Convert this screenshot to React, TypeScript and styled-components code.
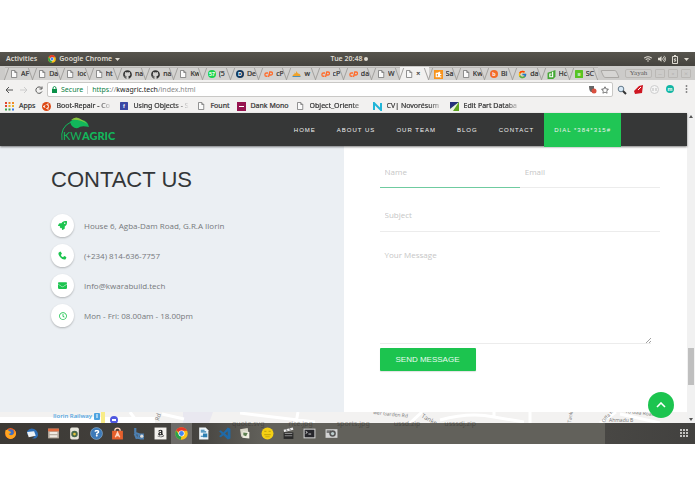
import React from 'react';
import styled, { createGlobalStyle, css } from 'styled-components';
import { FaRocket, FaEnvelope, FaRegClock, FaGithub, FaAmazon, FaWifi, FaVolumeUp, FaQuestion, FaRegStar } from 'react-icons/fa';
import { FcGoogle } from 'react-icons/fc';

const Global = createGlobalStyle`
  * { box-sizing: border-box; }
  body { margin: 0; background: #fff; font-family: "Open Sans", "Noto Sans", sans-serif; }
  button, input, textarea { font: inherit; }
`;

const Desktop = styled.div`
  display: flex;
  flex-direction: column;
  padding: 52px 0;
  overflow: hidden;
`;

/* ---------- system bar ---------- */
const SystemBar = styled.header`
  display: grid;
  grid-template-columns: 1fr auto 1fr;
  align-items: center;
  height: 14px;
  padding: 0 6px;
  background: linear-gradient(#57554e, #45433e);
  color: #dfdbd2;
  font: 600 7px/14px "Noto Sans", sans-serif;
`;
const BarGroup = styled.div<{ $end?: boolean }>`
  display: flex;
  align-items: center;
  gap: ${p => (p.$end ? 6 : 3)}px;
  justify-content: ${p => (p.$end ? 'flex-end' : 'flex-start')};
`;
const Activities = styled.span`
  margin-right: 8px;
`;
const Clock = styled.time`
  display: flex;
  align-items: center;
  gap: 2px;
  padding-left: 4px;
`;
const Dot = styled.span`
  width: 4px;
  height: 4px;
  border-radius: 50%;
  background: #dfdbd2;
`;

/* ---------- tabs ---------- */
const TabStrip = styled.div`
  display: flex;
  align-items: flex-end;
  height: 14px;
  padding-left: 5px;
  background: #cccbc9;
`;
const Tabs = styled.div`
  flex: 1;
  display: grid;
  grid-template-columns: repeat(21, minmax(0, 1fr));
`;
const Tab = styled.button<{ $active?: boolean }>`
  position: relative;
  display: flex;
  align-items: center;
  gap: 3px;
  height: 13px;
  padding: 0 0 0 5px;
  border: 0;
  border-top: 1px solid ${p => (p.$active ? '#f2f1f0' : '#b9b7b4')};
  background: ${p => (p.$active ? '#f2f1f0' : '#d3d2d0')};
  color: #333;
  font: 7px/12px "Noto Sans", sans-serif;
  &::before, &::after {
    content: "";
    position: absolute;
    top: 0;
    width: 1px;
    height: 12px;
    background: #a3a19e;
  }
  &::before { left: 1px; transform: skewX(-20deg); }
  &::after { right: 2px; transform: skewX(20deg); }
`;
const TabText = styled.span`
  width: 9px;
  overflow: hidden;
  white-space: nowrap;
  text-align: left;
  -webkit-text-stroke: 0.2px #333;
`;
const WindowTools = styled.div`
  flex: 0 0 97px;
  display: flex;
  align-items: center;
  justify-content: flex-end;
  gap: 3px;
  height: 13px;
  padding-right: 4px;
  color: #5d5c5a;
  font: 7px/10px "Liberation Serif", serif;
`;
const NewTab = styled.button`
  width: 16px;
  height: 8px;
  margin-right: auto;
  margin-left: 4px;
  padding: 0;
  border: 1px solid #aaa8a5;
  border-radius: 2px;
  background: #d6d5d3;
  transform: skewX(25deg);
`;
const Profile = styled.button`
  width: 27px;
  height: 9px;
  padding: 0;
  border: 1px solid #bab8b5;
  border-radius: 2px;
  background: #cfcecc;
  color: inherit;
  line-height: 7px;
`;
const WindowButton = styled.button`
  width: 10px;
  height: 9px;
  padding: 0;
  border: 1px solid #bab8b5;
  border-radius: 1px;
  background: transparent;
  color: #aaa8a5;
  line-height: 6px;
`;

/* ---------- toolbar ---------- */
const Toolbar = styled.div`
  display: flex;
  align-items: center;
  height: 19px;
  padding: 0 3px 0 3px;
  gap: 3px;
  background: #f2f1f0;
`;
const IconButton = styled.button`
  display: flex;
  padding: 0;
  border: 0;
  background: none;
  width: 12px;
  justify-content: center;
  color: #555;
`;
const Address = styled.label`
  flex: 1;
  display: flex;
  align-items: center;
  gap: 4px;
  height: 15px;
  margin: 0 0 0 -1px;
  padding: 0 3px 0 4px;
  border: 1px solid #c9c8c6;
  border-radius: 2px;
  background: #fff;
  color: #0b8043;
  font: 7px/13px "Noto Sans", sans-serif;
`;
const Secure = styled.span`
  padding-right: 4px;
  border-right: 1px solid #d6d6d6;
  line-height: 8px;
`;
const Url = styled.a`
  flex: 1;
  color: #888;
  text-decoration: none;
`;
const Scheme = styled.span`color: #0b8043;`;
const Host = styled.span`color: #222;`;
const Extensions = styled.div`
  display: flex;
  gap: 4px;
`;

/* ---------- bookmarks ---------- */
const Bookmarks = styled.nav`
  display: flex;
  align-items: center;
  gap: 7px;
  height: 14px;
  padding: 0 5px;
  background: #f2f1f0;
`;
const Bookmark = styled.a`
  display: flex;
  align-items: center;
  gap: 5px;
  color: #333;
  text-decoration: none;
  font: 7px/14px "Noto Sans", sans-serif;
  -webkit-text-stroke: 0.2px #333;
`;
const BookmarkIcon = styled.span`
  display: flex;
  justify-content: center;
  width: 9px;
`;
const BookmarkText = styled.span<{ $fade?: boolean }>`
  white-space: nowrap;
  ${p => p.$fade && css`
    width: 56px;
    mask-image: linear-gradient(90deg, #000 75%, transparent);
  `}
`;

/* ---------- page ---------- */
const Viewport = styled.div`
  position: relative;
  display: flex;
`;
const Page = styled.div`
  flex: 1;
  min-width: 0;
`;
const SiteNav = styled.nav`
  display: flex;
  align-items: center;
  justify-content: flex-end;
  height: 33px;
  padding: 0 66px 0 61px;
  background: #363737;
  box-shadow: 0 1px 2px rgba(0, 0, 0, 0.5);
  position: relative;
`;
const Brand = styled.a`
  display: flex;
  margin-right: auto;
`;
const NavLink = styled.a<{ $cta?: boolean }>`
  color: #f1f1f1;
  font: 6px/34px "Liberation Sans", sans-serif;
  letter-spacing: 1px;
  text-decoration: none;
  white-space: nowrap;
  padding: 0 10px 0 11px;
  ${p => p.$cta && css`
    align-self: flex-start;
    background: #20c655;
    padding: 0 10px;
  `}
`;
const Contact = styled.main`
  display: grid;
  grid-template-columns: 1fr 1fr;
`;
const Info = styled.section`
  padding: 18px 20px 0 51px;
  background: #ebeff3;
`;
const Title = styled.h1`
  margin: 0 0 18px;
  color: #333638;
  font: 400 22px/32px "Liberation Sans", sans-serif;
`;
const InfoList = styled.ul`
  display: flex;
  flex-direction: column;
  gap: 7px;
  margin: 0;
  padding: 0;
  list-style: none;
`;
const InfoItem = styled.li`
  display: flex;
  align-items: center;
  gap: 10px;
  color: #75787b;
  font-size: 8px;
  line-height: 12px;
`;
const Badge = styled.span`
  display: flex;
  align-items: center;
  justify-content: center;
  width: 23px;
  height: 23px;
  border-radius: 50%;
  background: #fff;
  box-shadow: 0 1px 2px rgba(0, 0, 0, 0.25);
  color: #1cc44f;
`;
const Form = styled.form`
  display: grid;
  grid-template-columns: 1fr 1fr;
  align-content: start;
  padding: 9px 27px 41px 36px;
  background: #fff;
`;
const fieldStyle = css`
  display: block;
  width: 100%;
  margin: 0;
  border: 0;
  border-bottom: 1px solid #ececec;
  border-radius: 0;
  background: transparent;
  color: #555;
  font-size: 8px;
  outline: 0;
  &::placeholder { color: #c6c6c6; opacity: 1; }
`;
const Field = styled.label<{ $wide?: boolean }>`
  ${p => p.$wide && css`grid-column: 1 / -1;`}
`;
const Input = styled.input<{ $focus?: boolean; $tall?: boolean }>`
  ${fieldStyle}
  height: ${p => (p.$tall ? 44 : 33)}px;
  padding: ${p => (p.$tall ? 10 : 0)}px 5px 0;
  ${p => p.$focus && css`border-bottom-color: #6fcba0;`}
`;
const Message = styled.textarea`
  ${fieldStyle}
  width: calc(100% - 9px);
  height: 112px;
  padding: 18px 5px 0;
  line-height: 10px;
  resize: none;
`;
const MessageBox = styled.div`
  position: relative;
`;
const Grip = styled.svg`
  position: absolute;
  right: 9px;
  bottom: 1px;
`;
const Send = styled.button`
  justify-self: start;
  height: 23px;
  margin-top: 4px;
  padding: 0 16px;
  border: 0;
  border-radius: 1px;
  background: #1cc44f;
  color: #e9fbef;
  font: 8px/22px "Liberation Sans", sans-serif;
  box-shadow: 0 1px 1px rgba(0, 0, 0, 0.12);
`;
const MapArea = styled.svg`
  display: block;
  width: 100%;
  height: 11px;
  background: #f3f2f1;
`;
const ToTop = styled.button`
  position: absolute;
  right: 21px;
  bottom: 5px;
  display: flex;
  align-items: center;
  justify-content: center;
  width: 26px;
  height: 26px;
  padding: 0;
  border: 0;
  border-radius: 50%;
  background: #1cc44f;
`;
const ScrollTrack = styled.div`
  display: flex;
  flex-direction: column;
  align-items: center;
  width: 8px;
  padding: 2px 0;
  background: #f1f1f1;
`;
const ScrollThumb = styled.div`
  width: 6px;
  height: 37px;
  background: #bfbfbf;
`;
const Space = styled.div<{ $grow: number }>`
  flex: ${p => p.$grow};
`;

/* ---------- dock ---------- */
const Dock = styled.footer`
  position: relative;
  display: flex;
  align-items: center;
  height: 21px;
  background: linear-gradient(90deg, #3c3935 0, #45433f 28%, #62615b 38%, #62615b 87%, #484744 87%, #42413f 100%);
`;
const Launchers = styled.div`
  display: grid;
  grid-template-columns: repeat(16, 1fr);
  flex: 0 0 342px;
`;
const Launcher = styled.button<{ $active?: boolean }>`
  position: relative;
  display: flex;
  align-items: center;
  justify-content: center;
  height: 21px;
  padding: 0;
  border: 0;
  background: ${p => (p.$active ? '#6d6b68' : 'transparent')};
`;
const AppsGrid = styled.button`
  display: flex;
  margin-left: auto;
  padding: 0 6px;
  border: 0;
  background: none;
`;
const Ghosts = styled.div`
  position: absolute;
  left: 232px;
  top: -3px;
  display: flex;
  gap: 24px;
  color: rgba(35, 34, 32, 0.4);
  font: 7px/8px "Noto Sans", sans-serif;
`;

/* ---------- icons ---------- */
const Chrome = ({ size = 9 }: { size?: number }) => (
  <svg width={size} height={size} viewBox="0 0 24 24">
    <circle cx="12" cy="12" r="11.5" fill="#fbc116" />
    <path d="M12 12 L2 6.3 A11.5 11.5 0 0 1 22.5 7 H12Z" fill="#e5392c" />
    <path d="M2 6.3 L8 15 L12 17 L10.5 23.4 A11.5 11.5 0 0 1 2 6.3Z" fill="#2aa24c" />
    <circle cx="12" cy="12" r="5.6" fill="#fff" />
    <circle cx="12" cy="12" r="4.4" fill="#4286f5" />
  </svg>
);
const Doc = () => (
  <svg width="8" height="8" viewBox="0 0 16 16" fill="#fafafa" stroke="#707070" strokeWidth="1.5">
    <path d="M3 1h6.500l4 4v10H3Z M9.500 1v4h4" />
  </svg>
);
const Mark = ({ bg, text, round, fg = '#fff' }: { bg: string; text?: string; round?: boolean; fg?: string }) => (
  <svg width="8" height="8" viewBox="0 0 16 16">
    <rect width="16" height="16" rx={round ? 8 : 1} fill={bg} />
    <text x="8" y="12" fontSize="11" fontWeight="700" textAnchor="middle" fill={fg} fontFamily="Liberation Sans">{text}</text>
  </svg>
);
const CPanel = () => (
  <svg width="9" height="8" viewBox="0 0 18 16" fill="none" stroke="#ff6c2c" strokeWidth="2.600">
    <path d="M8 6H5a3 3 0 0 0 0 6.500h2M9 14l2.500-10h2.500a3 3 0 0 1 0 6h-3" />
  </svg>
);
const Cloud = () => (
  <svg width="9" height="8" viewBox="0 0 18 16"><path d="M1 12q0-3 4-4V5l3 2V2l4 5q5 0 5 5Z" fill="#f0a32b" /><path d="M1 12h16v2H1Z" fill="#4f90b8" /></svg>
);
const Android = () => (
  <svg width="9" height="9" viewBox="0 0 16 16"><rect width="16" height="16" fill="#f7941d" /><path d="M7 6H4v6h4V4m0 4h5M10 3v8q0 2 3 1" fill="none" stroke="#fff" strokeWidth="2" /></svg>
);
const Leafy = () => (
  <svg width="9" height="9" viewBox="0 0 16 16"><path d="M1 5l8-3 6-2v12l-4 4H1Z" fill="#45a735" /><path d="M8 7H5v5h5V3" fill="none" stroke="#fff" strokeWidth="2" /></svg>
);

const tabs: [React.ReactNode, string][] = [
  [<Doc />, 'AF'], [<Doc />, 'Da'], [<Doc />, 'loc'], [<Doc />, 'ht'], [<FaGithub size={9} />, 'na'], [<FaGithub size={9} />, 'na'],
  [<Doc />, 'Kw'], [<Mark bg="#19d34b" text="57" round />, '(5'], [<Mark bg="#12395f" text="D" round />, 'De'], [<CPanel />, 'cP'],
  [<Cloud />, 'w'], [<CPanel />, 'cP'], [<CPanel />, 'da'], [<Doc />, 'W'], [<Doc />, '×'], [<Android />, 'Sa'], [<Doc />, 'Kw'],
  [<Mark bg="#f26b2a" text="b" round />, 'Bi'], [<FcGoogle size={9} />, 'da'], [<Leafy />, 'Hc'], [<Mark bg="#58c322" text="≡" />, 'SC'],
];

const bookmarks: [React.ReactNode, string, boolean][] = [
  [<svg width="9" height="9" viewBox="0 0 9 9">
    <path d="M0 1h2M0 4h2" stroke="#e0442f" strokeWidth="2" /><path d="M3.500 1h2M7 1h2" stroke="#f08a24" strokeWidth="2" />
    <path d="M3.500 4h2M7 4h2" stroke="#e8b02a" strokeWidth="2" /><path d="M0 7.500h2M3.500 7.500h2" stroke="#3fa34d" strokeWidth="2" /><path d="M7 7.500h2" stroke="#3b78e7" strokeWidth="2" />
  </svg>, 'Apps', false],
  [<svg width="9" height="9" viewBox="0 0 18 18"><circle cx="9" cy="9" r="9" fill="#dd4814" /><circle cx="9" cy="9" r="4" fill="none" stroke="#fff" strokeWidth="2" strokeDasharray="6.400 2" /><circle cx="3.500" cy="9" r="1.300" fill="#fff" /><circle cx="12" cy="4" r="1.300" fill="#fff" /><circle cx="12" cy="14" r="1.300" fill="#fff" /></svg>, 'Boot-Repair - Co', true],
  [<Mark bg="#3b48a5" text="f" />, 'Using Objects - S', true],
  [<Doc />, 'Fount', false],
  [<svg width="9" height="9" viewBox="0 0 9 9"><path d="M0 0h9v9H0Z" fill="#96144f" /><path d="M2 4h5v1H2Z" fill="#fff" /></svg>, 'Dank Mono', false],
  [<Doc />, 'Object_Oriente', true],
  [<svg width="9" height="9" viewBox="0 0 9 9"><path d="M1 8V1l7 7V1" fill="none" stroke="#21b5d8" strokeWidth="2" /></svg>, 'CV| Novorésum', true],
  [<svg width="9" height="9" viewBox="0 0 9 9"><path d="M0 0h9v9H0Z" fill="#5da31f" /><path d="M0 0h9L0 7Z" fill="#26307c" /><path d="M9 0 0 7v2h3Z" fill="#e8f0e0" /></svg>, 'Edit Part Databa', true],
];

const details: [React.ReactNode, string][] = [
  [<FaRocket size={9} />, 'House 6, Agba-Dam Road, G.R.A Ilorin'],
  [<svg width="9" height="9" viewBox="0 0 16 16"><path d="M1 3 4 1q1 0 3 4L5 7q1 3 4 4l2-2q4 1 4 3l-2 3Q8 16 4 11 0 7 1 3Z" fill="currentColor" /></svg>, '(+234) 814-636-7757'],
  [<FaEnvelope size={9} />, 'Info@kwarabuild.tech'],
  [<FaRegClock size={8} />, 'Mon - Fri: 08.00am - 18.00pm'],
];

const apps: [string, React.ReactNode][] = [
  ['Firefox', <><circle cx="12" cy="12" r="10" fill="#f2601d" /><circle cx="12" cy="10" r="6" fill="#3b6fc4" /><path d="M3 5q2 1 4 0 1 3 6 4-2 5-5 3 3 6 10 1 3-4 0-9 5 4 4 10-3 9-11 8Q0 19 3 5Z" fill="#ffa51f" /></>],
  ['Thunderbird', <><path d="M2 8Q7 0 16 4q7 4 6 12-3 7-11 5 4-1 5-4L2 14Z" fill="#2d6db5" /><path d="m2 9 13-1 3 8-13 3Z" fill="#eef2f5" /></>],
  ['Files', <><path d="M2 3h20v18H2Z" fill="#b9aea2" /><path d="M2 3h20v5H2Z" fill="#e26a3d" /><path d="M5 9h14v4H5Zm0 6h14v4H5Z" fill="#eee9e2" /></>],
  ['Rhythmbox', <><rect x="4" y="1" width="16" height="22" rx="3" fill="#e8e6dc" /><circle cx="12" cy="13" r="6" fill="#47694b" /><circle cx="12" cy="13" r="2.500" fill="#e4c53c" /></>],
  ['Help', <><circle cx="12" cy="12" r="11" fill="#3d7ab8" stroke="#9fbfdc" /><svg x="6" y="5" width="12" height="14"><FaQuestion size={13} color="#fff" /></svg></>],
  ['Software', <><path d="M2 7h20v16H2Z" fill="#e6602c" /><path d="M7 7q0-5 5-5t5 5M8 19l4-9 4 9M9 16h6" fill="none" stroke="#ffd6c0" strokeWidth="2.500" /></>],
  ['Disks', <><path d="M6 2v9l6 2v9M5 12l4 10M12 14h8v7h-6" fill="none" stroke="#4d7fb0" strokeWidth="4" /><circle cx="18" cy="17" r="3" fill="#ddd" /></>],
  ['Amazon', <><path d="M1 1h22v22H1Z" fill="#f4f2ee" /><svg x="4" y="4" width="16" height="17"><FaAmazon size={16} color="#222" /></svg></>],
  ['Chrome', <Chrome size={24} />],
  ['Writer', <><path d="M4 1h12l5 5v17H4Z" fill="#eef5fa" /><path d="M7 6h7M7 9h10M7 17h4" stroke="#2d80b3" strokeWidth="2" /><path d="M11 12h8v7h-8Z" fill="#2d80b3" /></>],
  ['Code', <path d="m2 8 3-2 5 4 8-9 5 2v18l-5 2-8-8-5 4-3-2 5-4ZM18 8l-5 4 5 4Z" fill="#1f6aa8" fillRule="evenodd" />],
  ['Photos', <><path d="m2 4 14-2 2 13-14 3Z" fill="#d8d6c7" /><path d="m7 8 12 1v12l-13-1Z" fill="#f1eee2" /><path d="m8 10 8 1-3 6-5-2Z" fill="#5e7f50" /></>],
  ['Chat', <><circle cx="12" cy="12" r="11" fill="#f4d014" /><path d="M6 8h4m4 0h4M6 14h12M8 18h8" stroke="#c9a90c" strokeWidth="2" /></>],
  ['Video', <><path d="M3 10h18v12H3Z" fill="#282828" /><path d="m3 5 17-4 1 4-17 4Z" fill="#eee" /><path d="m7 4 3 4m3-6 3 4M5 12h14M5 16h14" stroke="#888" strokeWidth="2" /></>],
  ['Terminal', <><path d="M1 3h22v18H1Z" fill="#ccc" /><path d="M3 5h18v14H3Z" fill="#26262b" /><path d="m5 8 3 2-3 2M10 13h5" fill="none" stroke="#eee" strokeWidth="1.500" /></>],
  ['Screenshot', <><path d="M1 4h22v16H1Z" fill="#d4d4d4" /><path d="M3 6h8v5H3Z" fill="#777" /><circle cx="14" cy="12" r="6" fill="#555" /><circle cx="14" cy="12" r="3" fill="#bcc" /></>],
];

export default function App() {
  return (
    <Desktop>
      <Global />
      <SystemBar>
        <BarGroup><Activities>Activities</Activities><Chrome size={8} /><span>Google Chrome</span>
          <svg width="5" height="3" viewBox="0 0 5 3"><path d="M0 0h5L2.500 3Z" fill="#dfdbd2" /></svg>
        </BarGroup>
        <Clock>Tue 20:48 <Dot /></Clock>
        <BarGroup $end><FaWifi size={8} /><FaVolumeUp size={8} />
          <svg width="6" height="9" viewBox="0 0 6 9"><path d="M.5 1.500h5v7h-5Zm1.500-1h2M3.500 3 2 5h2L2.500 7" fill="none" stroke="#dfdbd2" /></svg>
          <svg width="5" height="3" viewBox="0 0 5 3"><path d="M0 0h5L2.500 3Z" fill="#dfdbd2" /></svg>
        </BarGroup>
      </SystemBar>
      <TabStrip>
        <Tabs>
          {tabs.map(([icon, text], i) => <Tab key={i} $active={i === 14}>{icon}<TabText>{text}</TabText></Tab>)}
        </Tabs>
        <WindowTools>
          <NewTab aria-label="New tab" /><Profile>Yayah</Profile>
          <WindowButton aria-label="Minimize">–</WindowButton><WindowButton aria-label="Restore">▫</WindowButton><WindowButton aria-label="Close">×</WindowButton>
        </WindowTools>
      </TabStrip>
      <Toolbar>
        <IconButton aria-label="Back"><svg width="8" height="8" viewBox="0 0 8 8"><path d="M8 4H1M4 1 1 4l3 3" fill="none" stroke="#555" /></svg></IconButton>
        <IconButton aria-label="Forward"><svg width="8" height="8" viewBox="0 0 8 8"><path d="M0 4h7M4 1l3 3-3 3" fill="none" stroke="#ccc" /></svg></IconButton>
        <IconButton aria-label="Reload"><svg width="8" height="8" viewBox="0 0 8 8"><path d="M7 5.500A3.200 3.200 0 1 1 6.500 2M7 .5V3H4.500" fill="none" stroke="#555" /></svg></IconButton>
        <Address>
          <svg width="5" height="7" viewBox="0 0 5 7"><path d="M0 3h5v4H0Z" fill="#0b9048" /><path d="M1 3V1.500q1.500-2 3 0V3" fill="none" stroke="#0b9048" /></svg>
          <Secure>Secure</Secure>
          <Url href="#"><Scheme>https</Scheme>://<Host>kwagric.tech</Host>/index.html</Url>
          <svg width="9" height="9" viewBox="0 0 9 9"><path d="M1 1h5v6H3Q1 6 1 1Z" fill="#666" /><circle cx="6" cy="6" r="2.500" fill="#d9503f" /></svg>
          <FaRegStar size={8} color="#555" />
        </Address>
        <Extensions>
          <IconButton aria-label="Search"><svg width="10" height="10" viewBox="0 0 10 10"><circle cx="4" cy="4" r="2.800" fill="#d6e7f5" stroke="#64798a" /><path d="m6 6 3 3" stroke="#333" strokeWidth="2" /></svg></IconButton>
          <IconButton aria-label="Ruby"><svg width="9" height="9" viewBox="0 0 9 9"><path d="M5 1 9 0 8 8 1 9 0 6Z" fill="#cf1722" /><path d="m4 5 3-3" stroke="#fff" /></svg></IconButton>
          <IconButton aria-label="Inspector"><svg width="9" height="9" viewBox="0 0 9 9"><circle cx="4.500" cy="4.500" r="4" fill="#f5f5f5" stroke="#ccc" /><path d="M3 3v3m3-3v3" stroke="#bbb" /></svg></IconButton>
          <IconButton aria-label="Momentum"><Mark bg="#12b6a4" text="m" round /></IconButton>
          <IconButton aria-label="Menu"><svg width="3" height="8" viewBox="0 0 3 8"><path d="M1.500 0v2m0 1v2m0 1v2" stroke="#888" strokeWidth="1.500" /></svg></IconButton>
        </Extensions>
      </Toolbar>
      <Bookmarks>
        {bookmarks.map(([icon, text, fade]) => (
          <Bookmark href="#" key={text}><BookmarkIcon>{icon}</BookmarkIcon><BookmarkText $fade={fade}>{text}</BookmarkText></Bookmark>
        ))}
      </Bookmarks>
      <Viewport>
        <Page>
          <SiteNav>
            <Brand href="#" aria-label="Kwagric">
              <svg width="57" height="26" viewBox="0 0 57 26">
                <path d="M1 23Q-1 10 10 5" fill="none" stroke="#12b75b" />
                <path d="M9 5Q14-1 21 3 27 4 28 10 20 8 17 11 11 12 9 5Z" fill="#12b75b" />
                <path d="M10 3Q15-2 21 3 24 4 26 7 19 2 10 3Z" fill="#8bc63f" />
                <text x="2" y="23" fontFamily="Lato, sans-serif" fontSize="11" fill="#12b75b">KW</text>
                <text x="21" y="23" fontFamily="Lato, sans-serif" fontSize="11" fontWeight="900" fill="#12b75b">AGRIC</text>
              </svg>
            </Brand>
            <NavLink href="#">HOME</NavLink><NavLink href="#">ABOUT US</NavLink><NavLink href="#">OUR TEAM</NavLink>
            <NavLink href="#">BLOG</NavLink><NavLink href="#">CONTACT</NavLink><NavLink href="#" $cta>DIAL *384*315#</NavLink>
          </SiteNav>
          <Contact>
            <Info>
              <Title>CONTACT US</Title>
              <InfoList>
                {details.map(([icon, text]) => <InfoItem key={text}><Badge>{icon}</Badge>{text}</InfoItem>)}
              </InfoList>
            </Info>
            <Form onSubmit={e => e.preventDefault()}>
              <Field><Input $focus aria-label="Name" placeholder="Name" /></Field>
              <Field><Input aria-label="Email" placeholder="Email" /></Field>
              <Field $wide><Input $tall aria-label="Subject" placeholder="Subject" /></Field>
              <Field $wide>
                <MessageBox>
                  <Message aria-label="Your Message" placeholder="Your Message" />
                  <Grip width="5" height="5" viewBox="0 0 5 5"><path d="M0 5 5 0M3 5l2-2" stroke="#777" strokeWidth=".7" /></Grip>
                </MessageBox>
              </Field>
              <Send type="submit">SEND MESSAGE</Send>
            </Form>
          </Contact>
          <MapArea viewBox="0 0 687 11" preserveAspectRatio="xMinYMin slice">
            <path d="M0 5h155v6H0Z" fill="#fff" />
            <path d="M183 0h30l-4 11h-26Z" fill="#e9e8f0" />
            <path d="M130 0l8 11M162 2l22 5M240 1l75 9M298 0l-2 11M422 0l-12 11M440 8q30-8 54-3l30 5M494 0v6M530 0v11M616 0l-16 11M620 2l40 9" fill="none" stroke="#fff" strokeWidth="3" />
            <path d="M103 11V0" stroke="#f8ec87" strokeWidth="4" />
            <g fontFamily="Open Sans, sans-serif" fontSize="6" fill="#777">
              <text x="53" y="6" fontWeight="600" fill="#4da3e0">Ilorin Railway</text>
              <text transform="translate(159 9) rotate(-75)">Rd</text>
              <text transform="translate(373 2) rotate(6)" fontSize="5">wer Garden Rd</text>
              <text transform="translate(421 5) rotate(30)" fontSize="6">Tanke Rd</text>
              <text transform="translate(571 11) rotate(-80)" fontSize="5">Tanke</text>
              <text transform="translate(604 11) rotate(-50)" fontSize="5">Offa Rd</text>
              <text transform="translate(625 1) rotate(6)" fontSize="5">To Gaa Road</text>
              <text x="609" y="10" fontSize="5">Ahmadu B</text>
            </g>
            <rect x="94" y="1" width="6" height="7" rx="1" fill="#4da3e0" /><path d="M96 3h2M96 5h2" stroke="#fff" />
            <circle cx="114" cy="8" r="4" fill="#5058e0" /><path d="M112 7h4v2h-4Z" fill="#fff" />
          </MapArea>
        </Page>
        <ScrollTrack>
          <svg width="4" height="3" viewBox="0 0 4 3"><path d="M0 3h4L2 0Z" fill="#555" /></svg>
          <Space $grow={230} /><ScrollThumb /><Space $grow={33} />
          <svg width="4" height="3" viewBox="0 0 4 3"><path d="M0 0h4L2 3Z" fill="#555" /></svg>
        </ScrollTrack>
        <ToTop aria-label="Back to top"><svg width="10" height="6" viewBox="0 0 10 6"><path d="m1 5 4-4 4 4" fill="none" stroke="#fff" strokeWidth="1.600" /></svg></ToTop>
      </Viewport>
      <Dock>
        <Ghosts aria-hidden="true"><span>quote.svg</span><span>rice.jpg</span><span>sports.jpg</span><span>ussd.zip</span><span>usssdj.zip</span></Ghosts>
        <Launchers>
          {apps.map(([name, icon]) => (
            <Launcher key={name} aria-label={name} $active={name === 'Chrome'}><svg width="13" height="13" viewBox="0 0 24 24">{icon}</svg></Launcher>
          ))}
        </Launchers>
        <AppsGrid aria-label="Show applications">
          <svg width="9" height="9" viewBox="0 0 9 9"><path d="M0 1h9M0 4h9M0 7h9" stroke="#c4c3c1" strokeWidth="2" strokeDasharray="2 1" /><path d="M0 2.500h9M0 5.500h9" stroke="#454441" /></svg>
        </AppsGrid>
      </Dock>
    </Desktop>
  );
}
